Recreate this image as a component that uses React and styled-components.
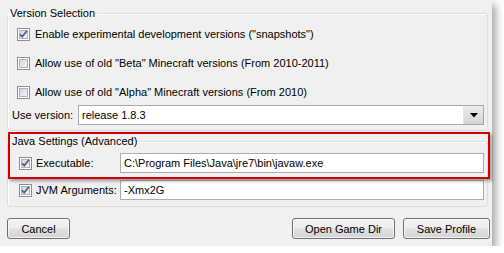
import React from 'react';
import styled, { createGlobalStyle } from 'styled-components';

const GlobalStyle = createGlobalStyle`
  html, body {
    margin: 0;
    background: #ffffff;
  }
  body {
    font-family: "Liberation Sans", Arial, sans-serif;
    font-size: 11px;
    color: #000;
  }
`;

const Window = styled.div`
  width: 492px;
  height: 246px;
  box-sizing: border-box;
  padding: 7px 4px 0 7px;
  background: #f0f0f0;
  box-shadow: 4px 4px 8px rgba(0, 0, 0, 0.35);
  display: flex;
  flex-direction: column;
`;

const GroupBox = styled.fieldset`
  margin: 0;
  min-width: 0;
  padding: 0 3px ${(p) => p.$bottom}px 0;
  border: 1px solid #d5dfe5;
  border-radius: 3px;
  box-shadow: inset 1px 1px 0 #ffffff;
`;

const Legend = styled.legend`
  padding: 0 2px;
  margin-left: ${(p) => p.$offset || 0}px;
  line-height: 13px;
  font-size: 11px;
  color: #000;
`;

const Rows = styled.div`
  display: flex;
  flex-direction: column;
  gap: ${(p) => p.$gap}px;
  padding-top: ${(p) => p.$top}px;
`;

const CheckRow = styled.label`
  height: 20px;
  display: flex;
  align-items: center;
  gap: 5px;
  padding-left: 9px;
`;

const FieldRow = styled.div`
  height: 20px;
  margin-top: ${(p) => p.$mt || 0}px;
  display: grid;
  grid-template-columns: ${(p) => p.$label}px 1fr;
  align-items: center;
  padding-left: ${(p) => p.$indent}px;
`;

const CheckLabel = styled.div`
  display: flex;
  align-items: center;
  gap: 4px;
`;

const TextField = styled.div`
  height: 20px;
  box-sizing: border-box;
  border: 1px solid #abadb3;
  background: #fff;
  padding: 0 3px;
  display: flex;
  align-items: center;
  white-space: nowrap;
  overflow: hidden;
`;

const Combo = styled.div`
  height: 20px;
  box-sizing: border-box;
  border: 1px solid #a9a9a9;
  background: #fff;
  display: flex;
  align-items: stretch;
`;

const ComboText = styled.div`
  flex: 1;
  display: flex;
  align-items: center;
  padding-left: 3px;
`;

const ComboButton = styled.div`
  width: 19px;
  display: flex;
  align-items: center;
  justify-content: center;
  background: linear-gradient(#ececec, #d4d4d4);
  border-left: 1px solid #e6e6e6;
`;

const JavaSection = styled.div`
  position: relative;
  margin-top: 4px;
`;

const Callout = styled.div`
  position: absolute;
  left: 1px;
  right: -2px;
  top: -3px;
  height: 47px;
  box-sizing: border-box;
  border: 2px solid #d10000;
  box-shadow: 2px 2px 3px rgba(0, 0, 0, 0.35);
  pointer-events: none;
`;

const ButtonBar = styled.div`
  margin-top: 11px;
  margin-right: -2px;
  display: flex;
  gap: 8px;
`;

const Spacer = styled.div`
  flex: 1;
`;

const Button = styled.button`
  width: ${(p) => p.$w}px;
  height: 21px;
  padding: 0;
  font-family: inherit;
  font-size: 11px;
  color: #000;
  border: 1px solid #707070;
  border-radius: 3px;
  background: linear-gradient(#f4f4f4 0%, #ececec 48%, #e0e0e0 52%, #d4d4d4 100%);
  box-shadow: inset 0 0 0 1px rgba(255, 255, 255, 0.7);
`;

function CheckBox({ checked }) {
  return (
    <svg width="13" height="13" viewBox="0 0 13 13">
      <defs>
        <linearGradient id="cbFill" x1="0" y1="0" x2="1" y2="1">
          <stop offset="0" stopColor="#cdd3dc" />
          <stop offset="1" stopColor="#f6f7f9" />
        </linearGradient>
      </defs>
      <rect x="0.5" y="0.5" width="12" height="12" fill="#fff" stroke="#8e8f8f" />
      <rect x="2.5" y="2.5" width="8" height="8" fill="url(#cbFill)" stroke="#b1b3b7" />
      {checked && (
        <path d="M3 6.2 L5.2 8.6 L10 2.8" fill="none" stroke="#4a5f97" strokeWidth="1.7" />
      )}
    </svg>
  );
}

function Arrow() {
  return (
    <svg width="8" height="5" viewBox="0 0 8 5">
      <path d="M0 0 H8 L4 4.5 Z" fill="#000" />
    </svg>
  );
}

export default function App() {
  return (
    <>
      <GlobalStyle />
      <Window>
        <GroupBox $bottom={5}>
          <Legend>Version Selection</Legend>
          <Rows $top={4} $gap={9}>
            <CheckRow>
              <CheckBox checked />
              Enable experimental development versions ("snapshots")
            </CheckRow>
            <CheckRow>
              <CheckBox />
              Allow use of old "Beta" Minecraft versions (From 2010-2011)
            </CheckRow>
            <CheckRow>
              <CheckBox />
              Allow use of old "Alpha" Minecraft versions (From 2010)
            </CheckRow>
            <FieldRow $label={66} $indent={4} $mt={-6}>
              <span>Use version:</span>
              <Combo>
                <ComboText>release 1.8.3</ComboText>
                <ComboButton>
                  <Arrow />
                </ComboButton>
              </Combo>
            </FieldRow>
          </Rows>
        </GroupBox>

        <JavaSection>
          <GroupBox $bottom={6}>
            <Legend $offset={2}>Java Settings (Advanced)</Legend>
            <Rows $top={5} $gap={7}>
              <FieldRow $label={101} $indent={11}>
                <CheckLabel>
                  <CheckBox checked />
                  Executable:
                </CheckLabel>
                <TextField>C:\Program Files\Java\jre7\bin\javaw.exe</TextField>
              </FieldRow>
              <FieldRow $label={101} $indent={11}>
                <CheckLabel>
                  <CheckBox checked />
                  JVM Arguments:
                </CheckLabel>
                <TextField>-Xmx2G</TextField>
              </FieldRow>
            </Rows>
          </GroupBox>
          <Callout />
        </JavaSection>

        <ButtonBar>
          <Button $w={63}>Cancel</Button>
          <Spacer />
          <Button $w={103}>Open Game Dir</Button>
          <Button $w={87}>Save Profile</Button>
        </ButtonBar>
      </Window>
    </>
  );
}
